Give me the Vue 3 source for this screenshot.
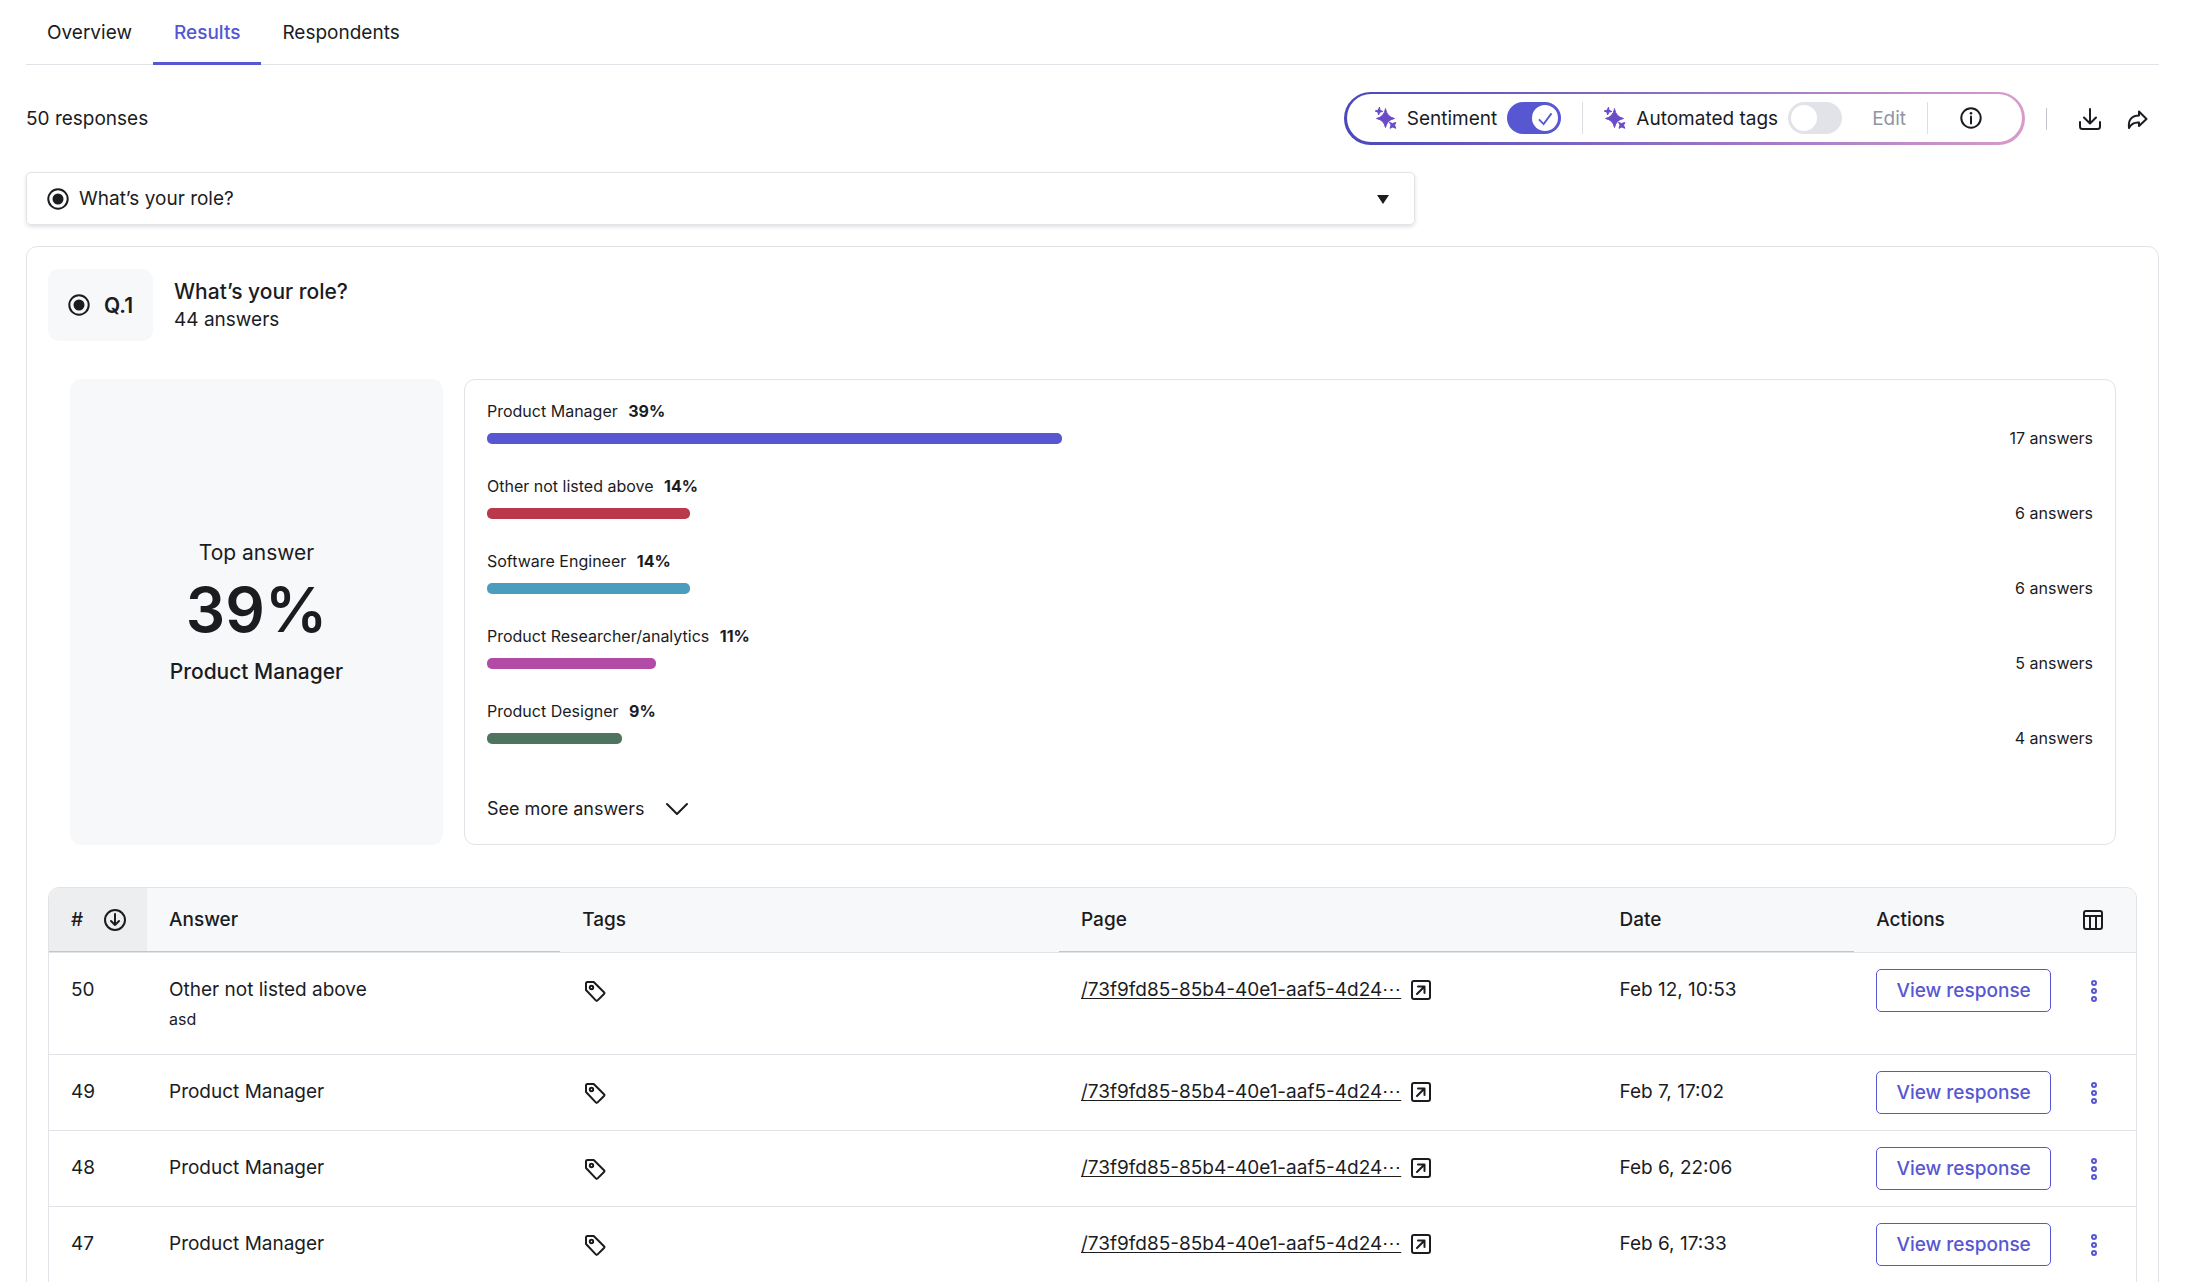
<script setup>
import { ref } from 'vue'

const tabs = ['Overview', 'Results', 'Respondents']
const activeTab = ref('Results')
const question = ref('role')
const sentiment = ref(true)
const autoTags = ref(false)

const answers = [
  { label: 'Product Manager', percent: 39, count: 17, color: '#5757d2' },
  { label: 'Other not listed above', percent: 14, count: 6, color: '#b93849' },
  { label: 'Software Engineer', percent: 14, count: 6, color: '#4a9dbd' },
  { label: 'Product Researcher/analytics', percent: 11, count: 5, color: '#b24ba6' },
  { label: 'Product Designer', percent: 9, count: 4, color: '#4f745e' },
]
const totalAnswers = 44

const pagePath = '/73f9fd85-85b4-40e1-aaf5-4d24⋯'
const rows = [
  { id: 50, answer: 'Other not listed above', note: 'asd', date: 'Feb 12, 10:53' },
  { id: 49, answer: 'Product Manager', date: 'Feb 7, 17:02' },
  { id: 48, answer: 'Product Manager', date: 'Feb 6, 22:06' },
  { id: 47, answer: 'Product Manager', date: 'Feb 6, 17:33' },
]
</script>

<template>
  <main class="page">
    <nav class="tabs">
      <a
        v-for="tab in tabs"
        :key="tab"
        href="#"
        class="tab"
        :class="{ active: tab === activeTab }"
        @click.prevent="activeTab = tab"
      >{{ tab }}</a>
    </nav>

    <div class="toolbar">
      <span>50 responses</span>
      <div class="tools">
        <div class="ai-pill">
          <div class="ai-inner">
            <label class="ai-option">
              <svg class="icon spark" viewBox="0 0 22 22"><path d="M10.500 2Q12 10 19.500 11.500Q12 13 10.500 20.500Q9 13 1.500 11.500Q9 10 10.500 2zM4.500 .500L5 3.200L7.800 4.500L5 5L3.500 8L3 5.200L.200 4L3 3.200zM14.800 15.500L17.500 16.500L20.800 15.500L19.600 18.200L20.800 21.300L17.800 20L15 21.300L16 18.400z" /></svg>
              <span>Sentiment</span>
              <input v-model="sentiment" type="checkbox" class="switch-input" />
              <span class="switch"><span class="knob"><svg v-if="sentiment" viewBox="0 0 28 28"><path d="M7.500 15.500l5 5L21 9" /></svg></span></span>
            </label>
            <span class="pill-divider"></span>
            <label class="ai-option">
              <svg class="icon spark" viewBox="0 0 22 22"><path d="M10.500 2Q12 10 19.500 11.500Q12 13 10.500 20.500Q9 13 1.500 11.500Q9 10 10.500 2zM4.500 .500L5 3.200L7.800 4.500L5 5L3.500 8L3 5.200L.200 4L3 3.200zM14.800 15.500L17.500 16.500L20.800 15.500L19.600 18.200L20.800 21.300L17.800 20L15 21.300L16 18.400z" /></svg>
              <span>Automated tags</span>
              <input v-model="autoTags" type="checkbox" class="switch-input" />
              <span class="switch"><span class="knob"><svg v-if="autoTags" viewBox="0 0 28 28"><path d="M7.500 15.500l5 5L21 9" /></svg></span></span>
            </label>
            <button class="edit" disabled>Edit</button>
            <span class="pill-divider"></span>
            <button class="icon-button info" aria-label="About AI features">
              <svg class="icon" viewBox="0 0 22 22"><circle cx="11" cy="11" r="9.700" /><path d="M11 9.500v7" /><circle class="dot" cx="11" cy="6.300" r="1.300" /></svg>
            </button>
          </div>
        </div>
        <span class="tool-divider"></span>
        <button class="icon-button download" aria-label="Download">
          <svg class="icon" viewBox="0 0 22 22"><path d="M11 1v14M5 9.500l6 6l6-6M1 14v4.500q0 2.500 2.500 2.500h15q2.500 0 2.500-2.500V14" /></svg>
        </button>
        <button class="icon-button" aria-label="Share">
          <svg class="icon" viewBox="0 0 22 22"><path d="M12 3.500L19.500 11l-7.500 7V14.500Q5 14 2 20Q.500 8 12 7.500z" /></svg>
        </button>
      </div>
    </div>

    <div class="question-select">
      <svg class="icon radio" viewBox="0 0 22 22"><circle cx="11" cy="11" r="9.700" /><circle class="dot" cx="11" cy="11" r="5.500" /></svg>
      <select v-model="question" aria-label="Question">
        <option value="role">What’s your role?</option>
      </select>
      <svg class="caret" viewBox="0 0 12 10"><path d="M0 1h12L6 10z" /></svg>
    </div>

    <section class="card">
      <header class="question">
        <div class="badge">
          <svg class="icon radio" viewBox="0 0 22 22"><circle cx="11" cy="11" r="9.700" /><circle class="dot" cx="11" cy="11" r="5.500" /></svg>
          <span>Q.1</span>
        </div>
        <div>
          <h2>What’s your role?</h2>
          <p>44 answers</p>
        </div>
      </header>

      <div class="summary">
        <div class="top-answer">
          <span class="top-label">Top answer</span>
          <strong class="top-value">39%</strong>
          <span class="top-name">Product Manager</span>
        </div>
        <div class="chart">
          <div v-for="a in answers" :key="a.label" class="bar-item">
            <div class="bar-label">{{ a.label }} <b>{{ a.percent }}%</b></div>
            <div class="bar-row">
              <div class="track">
                <div class="bar" :style="{ width: (a.count / totalAnswers) * 100 + '%', background: a.color }"></div>
              </div>
              <span class="count">{{ a.count }} answers</span>
            </div>
          </div>
          <button class="more">
            See more answers
            <svg class="icon" viewBox="0 0 22 22"><path d="M1 6l10 10L21 6" /></svg>
          </button>
        </div>
      </div>

      <div class="table-wrap">
        <table>
          <thead>
            <tr>
              <th class="col-id sorted lined">
                <button class="sort">#
                  <svg class="icon" viewBox="0 0 22 22"><circle cx="11" cy="11" r="10" /><path d="M11 5v11M7 12l4 4l4-4" /></svg>
                </button>
              </th>
              <th class="col-answer lined">Answer</th>
              <th class="col-tags">Tags</th>
              <th class="col-page lined">Page</th>
              <th class="col-date lined">Date</th>
              <th>
                <div class="actions-head">
                  Actions
                  <button class="icon-button" aria-label="Choose columns">
                    <svg class="icon" viewBox="0 0 22 22"><rect x="2" y="2" width="18" height="18" rx="2" /><path d="M2 7h18M8 7v13M14 7v13" /></svg>
                  </button>
                </div>
              </th>
            </tr>
          </thead>
          <tbody>
            <tr v-for="row in rows" :key="row.id">
              <td>{{ row.id }}</td>
              <td>{{ row.answer }}<div v-if="row.note" class="note">{{ row.note }}</div></td>
              <td>
                <button class="icon-button tag" aria-label="Add tag">
                  <svg class="icon" viewBox="0 0 22 22"><path d="M2 3.500Q2 2 3.500 2h6.200l10.300 10.200q.9 .9 0 1.800l-6.400 6.400q-.9 .9-1.800 0L2 10z" /><circle cx="7.500" cy="7.500" r="1.700" /></svg>
                </button>
              </td>
              <td>
                <a class="page-link" href="#"><span>{{ pagePath }}</span>
                  <svg class="icon" viewBox="0 0 22 22"><rect x="2" y="2" width="18" height="18" rx="2" /><path d="M7 15l7-7M8 7.500h6.500v6.500" /></svg>
                </a>
              </td>
              <td>{{ row.date }}</td>
              <td class="cell-actions">
                <div class="actions">
                  <button class="view">View response</button>
                  <button class="icon-button kebab" aria-label="More actions">
                    <svg class="icon" viewBox="0 0 22 22"><circle cx="11" cy="3" r="2" /><circle cx="11" cy="11" r="2" /><circle cx="11" cy="19" r="2" /></svg>
                  </button>
                </div>
              </td>
            </tr>
          </tbody>
        </table>
      </div>
    </section>
  </main>
</template>

<style>
body {
  margin: 0;
  background: #fff;
}
html {
  overflow: hidden;
}
</style>

<style scoped>
* {
  box-sizing: border-box;
}
.page {
  padding: 0 39px 0 26px;
  font-family: Inter, "Liberation Sans", sans-serif;
  font-size: 19px;
  line-height: 27px;
  color: #1b1c1f;
}
button,
select {
  padding: 0;
  border: 0;
  background: none;
  font: inherit;
  color: inherit;
}
.icon {
  display: block;
  flex: none;
  width: 22px;
  height: 22px;
  fill: none;
  stroke: currentColor;
  stroke-width: 2;
  stroke-linejoin: round;
  stroke-linecap: round;
}
.icon .dot {
  fill: currentColor;
  stroke: none;
}
.icon-button {
  display: block;
}

.tabs {
  display: flex;
  height: 65px;
  border-bottom: 1px solid #e2e3e8;
}
.tab {
  height: 65px;
  padding: 19px 21px 0;
  color: inherit;
  text-decoration: none;
}
.tab.active {
  border-bottom: 3px solid #5757d2;
  color: #5757d2;
  font-weight: 500;
}

.toolbar {
  display: flex;
  align-items: center;
  justify-content: space-between;
  height: 53px;
  margin: 27px 0;
}
.tools {
  display: flex;
  align-items: center;
  padding-right: 10px;
}
.ai-pill {
  height: 53px;
  padding: 2px 3px 3px;
  border-radius: 27px;
  background: linear-gradient(90deg, #4a48bb, #d99acb);
}
.ai-inner {
  display: flex;
  align-items: center;
  height: 48px;
  padding: 0 40px 0 28px;
  border-radius: 24px;
  background: #fff;
}
.ai-option {
  display: flex;
  align-items: center;
  gap: 10px;
}
.icon.spark {
  fill: #6a4bc8;
  stroke: #6a4bc8;
  stroke-width: 1;
}
.switch-input {
  position: absolute;
  opacity: 0;
}
.switch {
  display: flex;
  width: 54px;
  height: 32px;
  padding: 3px;
  border-radius: 16px;
  background: #e2e3e8;
}
.knob {
  width: 26px;
  height: 26px;
  border-radius: 50%;
  background: #fff;
}
.knob svg {
  display: block;
  fill: none;
  stroke: #5757d2;
  stroke-width: 2;
}
.switch-input:checked + .switch {
  justify-content: flex-end;
  background: #5757d2;
}
.pill-divider {
  width: 1px;
  height: 32px;
  margin: 0 21px;
  background: #dddee3;
}
.edit {
  margin-left: 30px;
  color: #8f95a3;
}
.info {
  margin-left: 11px;
}
.tool-divider {
  width: 1px;
  height: 22px;
  margin: 0 32px 0 21px;
  background: #c3c5ce;
}
.download {
  margin-right: 26px;
}

.question-select {
  display: flex;
  align-items: center;
  gap: 10px;
  width: 65.1%;
  height: 53px;
  padding: 0 25px 0 20px;
  border: 1px solid #e2e3e8;
  border-radius: 5px;
  box-shadow: 0 2px 4px rgba(0, 0, 0, 0.12);
}
.question-select select {
  flex: 1;
  appearance: none;
  height: 51px;
}
.caret {
  width: 12px;
  height: 10px;
  fill: #1b1c1f;
}

.card {
  margin-top: 21px;
  padding: 22px 21px;
  border: 1px solid #e2e3e8;
  border-radius: 11px;
}
.question {
  display: flex;
  align-items: center;
  gap: 21px;
}
.badge {
  display: flex;
  align-items: center;
  gap: 14px;
  height: 72px;
  padding: 0 20px;
  border-radius: 11px;
  background: #f7f8fa;
  font-size: 21px;
  font-weight: 600;
}
h2,
p {
  margin: 0;
}
h2 {
  font-size: 21px;
  line-height: 29px;
  font-weight: 500;
}

.summary {
  display: flex;
  gap: 21px;
  margin: 38px 21px 42px 22px;
}
.top-answer {
  display: flex;
  flex-direction: column;
  align-items: center;
  justify-content: center;
  width: 373px;
  border-radius: 11px;
  background: #f7f8fa;
  font-size: 21px;
  line-height: 32px;
}
.top-value {
  margin: 6px 0 11px;
  font-size: 62px;
  line-height: 70px;
  font-weight: 600;
}
.top-name {
  font-weight: 500;
}
.chart {
  flex: 1;
  height: 466px;
  padding: 20px 22px;
  border: 1px solid #e2e3e8;
  border-radius: 11px;
  font-size: 16px;
  line-height: 22px;
}
.bar-item {
  height: 75px;
}
.bar-label b {
  margin-left: 6px;
}
.bar-row {
  display: flex;
  align-items: center;
  margin-top: 5px;
}
.track {
  flex: 1;
}
.bar {
  height: 11px;
  border-radius: 5px;
}
.count {
  width: 118px;
  text-align: right;
}
.more {
  display: flex;
  align-items: center;
  gap: 21px;
  margin-top: 20px;
  font-size: 18px;
  line-height: 27px;
}

.table-wrap {
  overflow: hidden;
  border: 1px solid #e2e3e8;
  border-radius: 11px 11px 0 0;
}
table {
  width: 100%;
  table-layout: fixed;
  border-collapse: separate;
  border-spacing: 0;
}
th,
td {
  padding: 0 21px 0 22px;
  border-bottom: 1px solid #e2e3e8;
  text-align: left;
  vertical-align: top;
}
th {
  height: 65px;
  padding-top: 18px;
  background: #f7f8fa;
  font-weight: 500;
}
.lined {
  box-shadow: inset 0 -1px #c3c5ce;
}
.sorted {
  background: #edeef0;
}
.col-id {
  width: 98px;
}
.col-answer {
  width: 19.8%;
}
.col-tags {
  width: 23.9%;
}
.col-page {
  width: 25.8%;
}
.col-date {
  width: 12.3%;
}
.sort {
  display: flex;
  align-items: center;
  gap: 21px;
}
.actions-head {
  display: flex;
  align-items: center;
  justify-content: space-between;
  padding-right: 11px;
}
td {
  height: 76px;
  padding-top: 23px;
  padding-bottom: 24px;
}
.note {
  margin-top: 5px;
  font-size: 16px;
  line-height: 22px;
}
.tag {
  margin: 4px 0 0 2px;
}
.page-link {
  display: flex;
  align-items: center;
  gap: 9px;
  color: inherit;
  text-underline-offset: 2px;
}
.cell-actions {
  padding-top: 16px;
  padding-bottom: 0;
}
.actions {
  display: flex;
  align-items: center;
  justify-content: space-between;
  padding-right: 10px;
  color: #5757d2;
}
.view {
  width: 175px;
  height: 43px;
  border: 1px solid #5757d2;
  border-radius: 5px;
  font-weight: 500;
}
</style>
